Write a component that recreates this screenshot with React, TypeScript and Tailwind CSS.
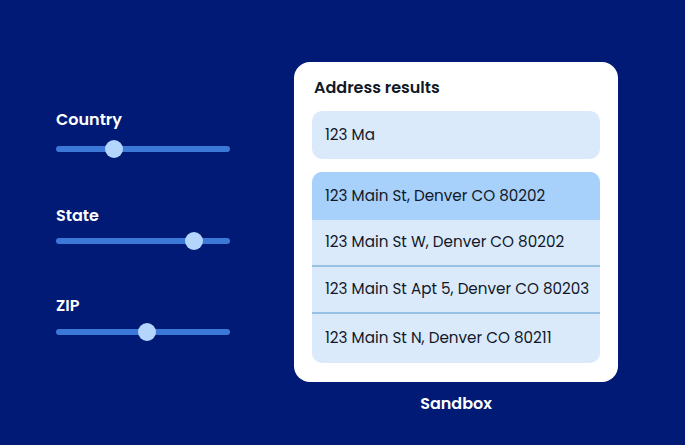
import React from "react";

const font = { fontFamily: "Poppins, Inter, 'Noto Sans', sans-serif" };

function Slider({ label, pos, gap }: { label: string; pos: number; gap: string }) {
  return (
    <div className="flex flex-col">
      <div className="text-[16px] font-semibold leading-5 text-white">{label}</div>
      <div className={`relative h-[6px] w-[174px] rounded-full bg-[#3b78d8] ${gap}`}>
        <div
          className="absolute top-1/2 h-[18px] w-[18px] -translate-x-1/2 -translate-y-1/2 rounded-full bg-[#b4d5fc]"
          style={{ left: pos }}
        />
      </div>
    </div>
  );
}

export default function App() {
  const rows = [
    "123 Main St W, Denver CO 80202",
    "123 Main St Apt 5, Denver CO 80203",
    "123 Main St N, Denver CO 80211",
  ];
  return (
    <div className="h-[445px] w-[685px] bg-[#011a76] text-[#111827]" style={font}>
      <div className="flex">
        <div className="ml-[56px] mt-[110px] flex flex-col">
          <Slider label="Country" pos={58} gap="mt-[16px]" />
          <div className="mt-[54px]">
            <Slider label="State" pos={138} gap="mt-[12px]" />
          </div>
          <div className="mt-[52px]">
            <Slider label="ZIP" pos={91} gap="mt-[13px]" />
          </div>
        </div>
        <div className="ml-[64px] mt-[62px] flex flex-col items-center">
          <div className="w-[324px] rounded-[16px] bg-white px-[18px] pb-[19px] pt-[16px]">
            <div className="ml-[2px] text-[16px] font-semibold leading-5 text-[#111827]">Address results</div>
            <div className="mt-[13px] flex h-[48px] items-center rounded-[10px] bg-[#dbeafb] pl-[13px] text-[15.2px]">
              123 Ma
            </div>
            <div className="mt-[13px] overflow-hidden rounded-[10px] bg-[#dbeafb]">
              <div className="flex h-[48px] items-center whitespace-nowrap bg-[#a7d0fb] pl-[13px] text-[15.2px]">
                123 Main St, Denver CO 80202
              </div>
              {rows.map((r, i) => (
                <div
                  key={r}
                  className={
                    i < 2
                      ? "flex h-[47px] items-center whitespace-nowrap border-b-2 border-[#98c0e3] pl-[13px] text-[15.2px]"
                      : "flex h-[49px] items-center whitespace-nowrap pl-[13px] text-[15.2px]"
                  }
                >
                  {r}
                </div>
              ))}
            </div>
          </div>
          <div className="mt-[12px] text-[16px] font-semibold leading-5 text-white">Sandbox</div>
        </div>
      </div>
    </div>
  );
}
